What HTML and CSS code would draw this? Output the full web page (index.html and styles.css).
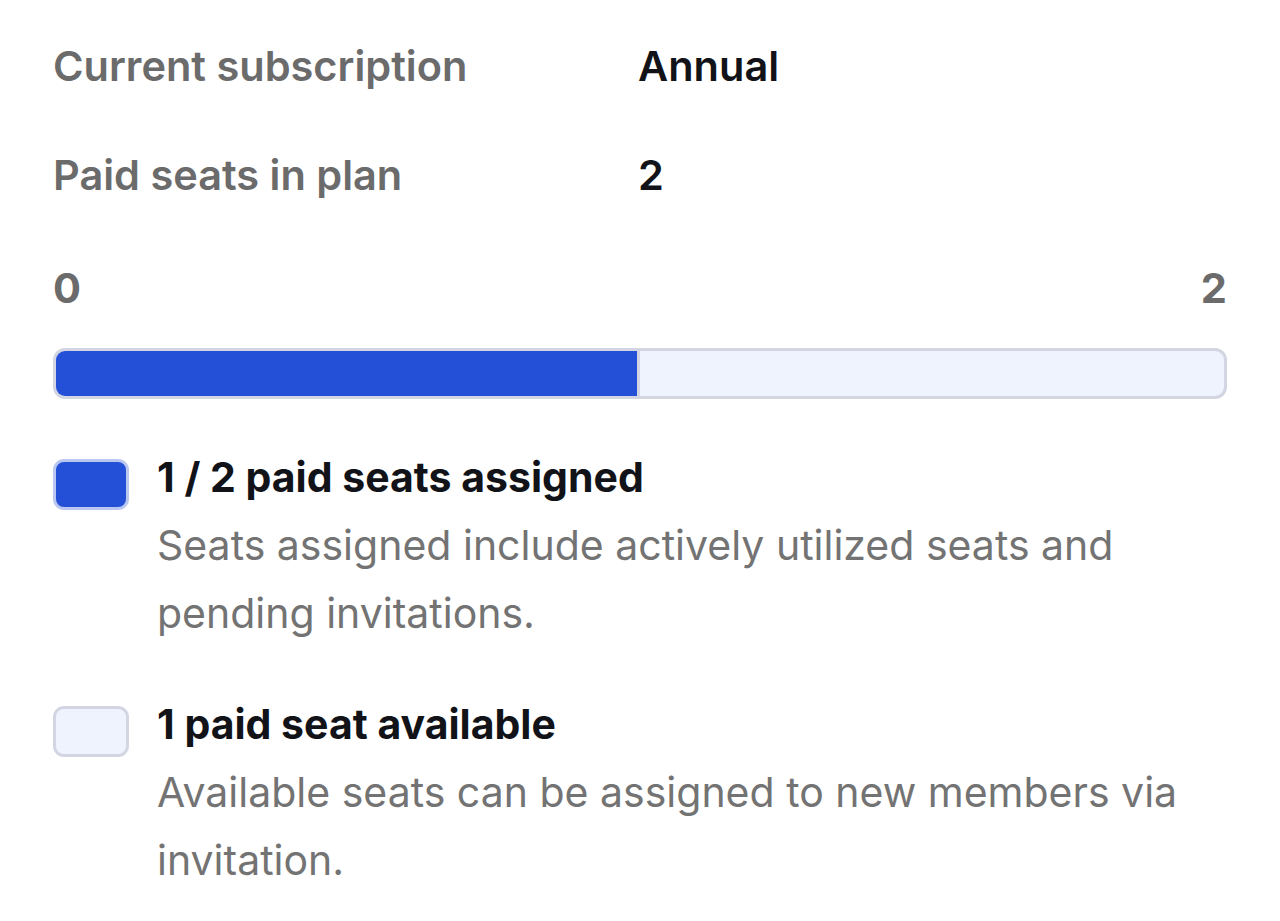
FILE: index.html
```html
<!DOCTYPE html>
<html lang="en">
<head>
  <meta charset="UTF-8">
  <meta name="viewport" content="width=device-width, initial-scale=1.0">
  <title>Seats</title>
  <link rel="stylesheet" href="styles.css">
</head>
<body>
  <div class="seats">
    <div class="plan-info">
      <span class="info-label">Current subscription</span>
      <span class="info-value">Annual</span>
      <span class="info-label">Paid seats in plan</span>
      <span class="info-value">2</span>
    </div>

    <div class="scale">
      <span>0</span>
      <span>2</span>
    </div>

    <div class="usage-bar">
      <div class="usage-fill" style="width: 50%"></div>
    </div>

    <ul class="legend">
      <li class="legend-item">
        <span class="swatch swatch-assigned"></span>
        <div class="legend-text">
          <div class="legend-title">1 / 2 paid seats assigned</div>
          <p class="legend-desc">Seats assigned include actively utilized seats and pending invitations.</p>
        </div>
      </li>
      <li class="legend-item">
        <span class="swatch swatch-available"></span>
        <div class="legend-text">
          <div class="legend-title">1 paid seat available</div>
          <p class="legend-desc">Available seats can be assigned to new members via invitation.</p>
        </div>
      </li>
    </ul>
  </div>
</body>
</html>
```

FILE: styles.css
```css
:root {
  --text: #111318;
  --muted: #6b6b6b;
  --desc: #737373;
  --blue: #2450d8;
  --blue-border: #b9c7f1;
  --track: #eff3fd;
  --track-border: #d3d5e2;
}

* {
  box-sizing: border-box;
  margin: 0;
  padding: 0;
}

body {
  font-family: Inter, "Noto Sans", sans-serif;
  color: var(--text);
  background: #fff;
}

.seats {
  padding: 36px 53px 0 53px;
}

.plan-info {
  display: grid;
  grid-template-columns: 1fr 1fr;
  row-gap: 49px;
  font-size: 41.5px;
  line-height: 60px;
  font-weight: 600;
}

.info-label {
  color: var(--muted);
}

.info-value {
  color: var(--text);
  margin-left: -2px;
}

.scale {
  display: flex;
  justify-content: space-between;
  margin-top: 53px;
  font-size: 41.5px;
  line-height: 60px;
  font-weight: 700;
  color: var(--muted);
}

.usage-bar {
  display: flex;
  margin-top: 30px;
  height: 51px;
  border: 3px solid var(--track-border);
  border-radius: 12px;
  background: var(--track);
  overflow: hidden;
}

.usage-fill {
  height: 100%;
  background: var(--blue);
  border-right: 3px solid var(--track-border);
  margin-right: -1px;
}

.legend {
  list-style: none;
  display: flex;
  flex-direction: column;
  gap: 43px;
  margin-top: 44px;
}

.legend-item {
  display: flex;
  align-items: flex-start;
  gap: 28px;
}

.swatch {
  flex: none;
  width: 76px;
  height: 51px;
  margin-top: 16px;
  border-radius: 11px;
  border: 3px solid;
}

.swatch-assigned {
  background: var(--blue);
  border-color: var(--blue-border);
}

.swatch-available {
  background: var(--track);
  border-color: var(--track-border);
}

.legend-text {
  flex: 1;
}

.legend-title {
  font-size: 41px;
  line-height: 68px;
  font-weight: 700;
}

.legend-desc {
  font-size: 41px;
  line-height: 68px;
  font-weight: 400;
  color: var(--desc);
}
```
